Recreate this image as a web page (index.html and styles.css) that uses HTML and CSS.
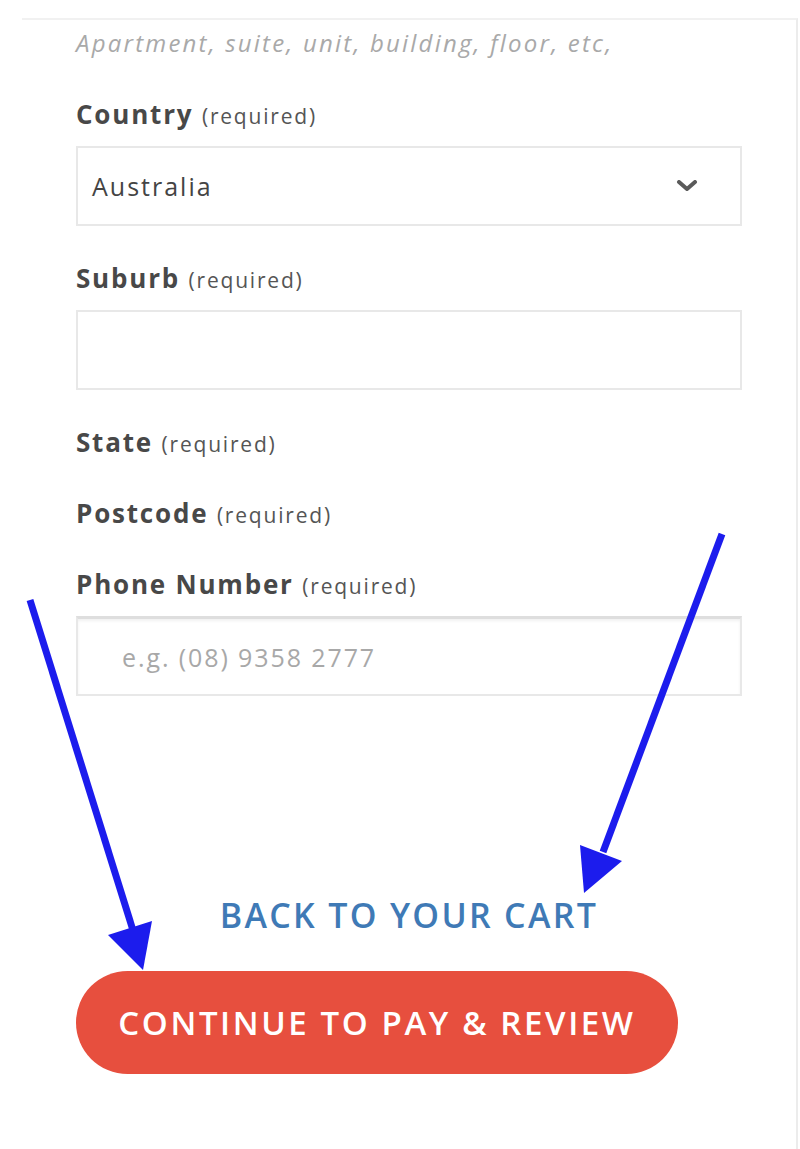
FILE: index.html
```html
<!DOCTYPE html>
<html lang="en">
<head>
    <meta charset="UTF-8">
    <meta name="viewport" content="width=device-width, initial-scale=1.0">
    <title>Checkout - Shipping Address</title>
    <link rel="stylesheet" href="styles.css">
</head>
<body>
    <div class="checkout-card">
        <form class="address-form" id="addressForm">
            <p class="hint">Apartment, suite, unit, building, floor, etc,</p>

            <div class="field field-input">
                <label for="country">Country <span class="req">(required)</span></label>
                <div class="select-box">
                    <span class="select-value">Australia</span>
                    <svg class="chevron" width="22" height="12" viewBox="0 0 22 12">
                        <polyline points="3,2 11,9 19,2" fill="none" stroke="#5a5a5a" stroke-width="4" stroke-linecap="round" stroke-linejoin="round"/>
                    </svg>
                </div>
            </div>

            <div class="field field-input">
                <label for="suburb">Suburb <span class="req">(required)</span></label>
                <input type="text" id="suburb" class="text-input">
            </div>

            <div class="field">
                <label>State <span class="req">(required)</span></label>
            </div>

            <div class="field">
                <label>Postcode <span class="req">(required)</span></label>
            </div>

            <div class="field field-input">
                <label for="phone">Phone Number <span class="req">(required)</span></label>
                <input type="tel" id="phone" class="text-input phone-input" placeholder="e.g. (08) 9358 2777">
            </div>

            <div class="actions">
                <a href="#" class="back-link">BACK TO YOUR CART</a>
                <button type="submit" class="continue-btn">CONTINUE TO PAY &amp; REVIEW</button>
            </div>
        </form>
    </div>

    <!-- annotation arrows drawn over the screenshot -->
    <svg class="annotations" width="800" height="1149" viewBox="0 0 800 1149">
        <line x1="30" y1="600" x2="136" y2="940" stroke="#1c1ced" stroke-width="7"/>
        <polygon points="108,935 152,921 143,970" fill="#1c1ced"/>
        <line x1="722" y1="534" x2="603" y2="852" stroke="#1c1ced" stroke-width="7"/>
        <polygon points="580,845 622,861 584,893" fill="#1c1ced"/>
    </svg>
</body>
</html>
```

FILE: styles.css
```css
/* Checkout address form */
body {
    font-family: "Open Sans", Arial, sans-serif;
    background-color: #fff;
    margin: 0;
    padding: 0;
    position: relative;
    height: 1149px;
    overflow: hidden;
}
.checkout-card {
    margin: 18px 2px 0 22px;
    border-top: 2px solid #f1f1f1;
    border-right: 2px solid #ececec;
    height: 1129px;
    padding: 0 56px 0 54px;
}
.address-form {
    display: flex;
    flex-direction: column;
    width: 666px;
}
.hint {
    margin: 8px 0 0 0;
    font-size: 24px;
    line-height: 30px;
    font-style: italic;
    letter-spacing: 2.2px;
    color: #a9a9a9;
}
.field {
    margin-top: 41px;
}
.field-input + .field {
    margin-top: 37px;
}
.field label {
    display: block;
    font-size: 26px;
    line-height: 30px;
    font-weight: 700;
    letter-spacing: 1.8px;
    color: #484848;
}
.field-input label {
    margin-bottom: 17px;
}
.req {
    font-size: 21px;
    line-height: 1;
    font-weight: 400;
    letter-spacing: 1.8px;
    color: #555;
}
.select-box,
.text-input {
    box-sizing: border-box;
    width: 666px;
    height: 80px;
    border: 2px solid #e8e8e8;
    background: #fff;
}
.select-box {
    display: flex;
    align-items: center;
    justify-content: space-between;
    padding: 0 42px 0 14px;
}
.select-value {
    font-size: 25px;
    letter-spacing: 2px;
    color: #444;
}
.text-input {
    display: block;
    margin: 0;
    padding: 0 0 0 44px;
    font-family: inherit;
    font-size: 25px;
    letter-spacing: 1.9px;
    color: #444;
    outline: none;
}
.phone-input {
    border-top: 3px solid #dedede;
    box-shadow: inset 0 2px 3px rgba(0, 0, 0, 0.06);
}
.text-input::placeholder {
    color: #a8a8a8;
}
.actions {
    display: flex;
    flex-direction: column;
    align-items: center;
    margin-top: 199px;
}
.back-link {
    font-size: 34px;
    line-height: 40px;
    font-weight: 600;
    letter-spacing: 2.3px;
    color: #3f7ab6;
    text-decoration: none;
}
.continue-btn {
    align-self: flex-start;
    margin-top: 36px;
    width: 602px;
    height: 103px;
    border: none;
    border-radius: 52px;
    background-color: #e74f3e;
    color: #fff;
    font-family: inherit;
    font-size: 33px;
    font-weight: 600;
    letter-spacing: 2.6px;
    cursor: pointer;
}
.annotations {
    position: absolute;
    top: 0;
    left: 0;
    pointer-events: none;
}
```
